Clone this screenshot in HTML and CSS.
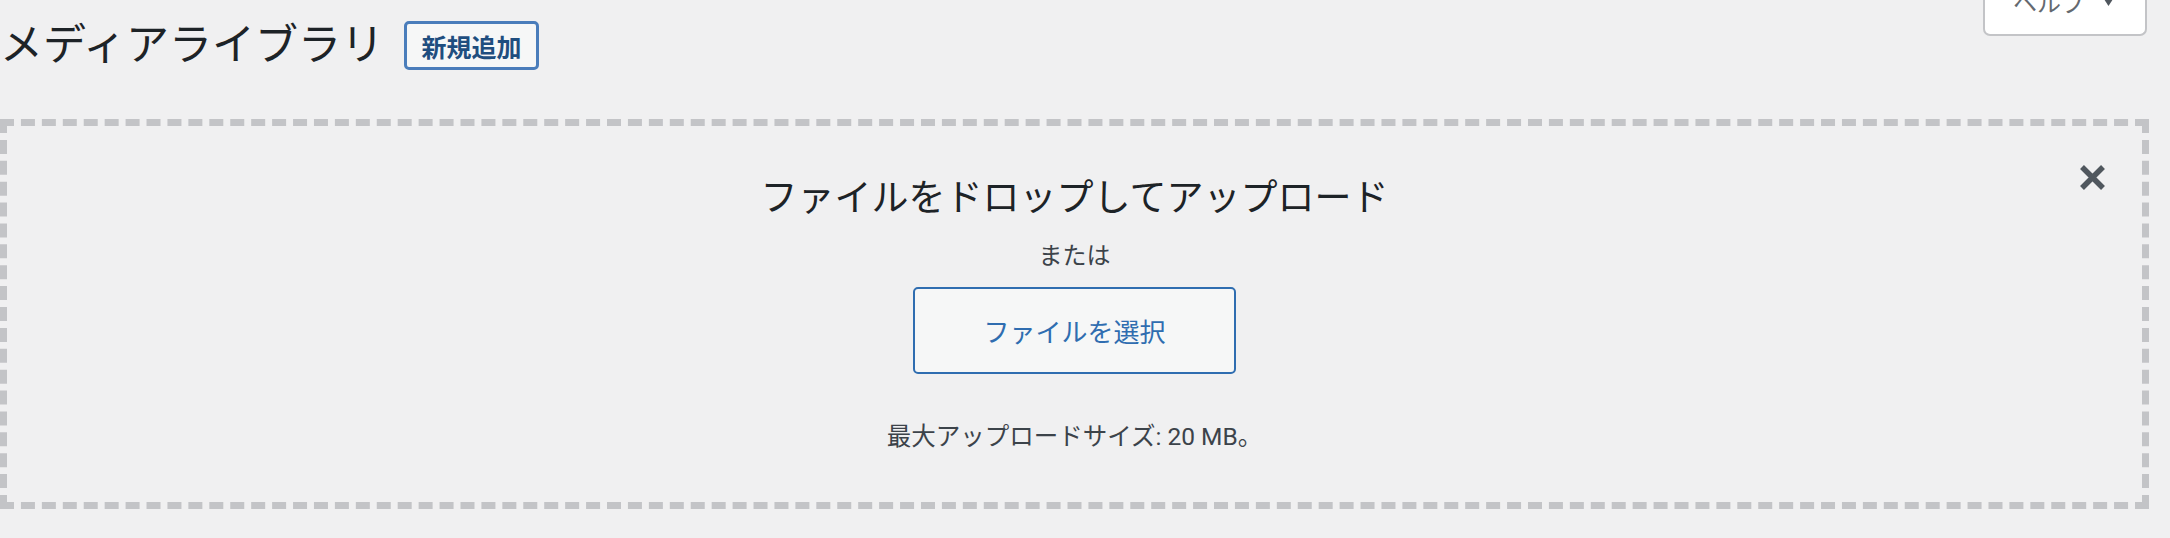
FILE: index.html
```html
<!DOCTYPE html>
<html lang="ja">
<head>
    <meta charset="UTF-8">
    <meta name="viewport" content="width=device-width, initial-scale=1.0">
    <title>メディアライブラリ</title>
    <link rel="stylesheet" href="styles.css">
</head>
<body>
    <div class="wrap">
        <div class="topbar">
            <div class="title-row">
                <h1>メディアライブラリ</h1>
                <a href="#" class="add-new">新規追加</a>
            </div>
            <button class="help-btn">
                <span>ヘルプ</span>
                <svg width="13" height="10" viewBox="0 0 13 10"><path d="M0 0 H13 L6.5 10 Z" fill="#50575e"/></svg>
            </button>
        </div>

        <div class="uploader">
            <button class="close-btn" aria-label="閉じる">
                <svg width="29" height="29" viewBox="0 0 29 29">
                    <path d="M4 4 L25 25 M25 4 L4 25" stroke="#50575e" stroke-width="5.5" fill="none"/>
                </svg>
            </button>
            <div class="upload-ui">
                <h2>ファイルをドロップしてアップロード</h2>
                <p class="or">または</p>
                <button class="browse">ファイルを選択</button>
                <p class="max-size">最大アップロードサイズ: 20 MB。</p>
            </div>
        </div>
    </div>
</body>
</html>
```

FILE: styles.css
```css
body {
    margin: 0;
    background-color: #f0f0f1;
    font-family: Roboto, "Noto Sans CJK JP", sans-serif;
    color: #3c434a;
}
.wrap {
    padding-right: 21px;
}
.topbar {
    display: flex;
    justify-content: space-between;
    align-items: flex-start;
}
.title-row {
    display: flex;
    align-items: center;
    gap: 20px;
    margin-top: 21px;
}
h1 {
    margin: 0;
    font-size: 43px;
    font-weight: 400;
    line-height: 1;
    color: #1d2327;
}
.add-new {
    display: inline-flex;
    align-items: center;
    justify-content: center;
    box-sizing: border-box;
    width: 135px;
    height: 49px;
    border: 3px solid #4a7dbb;
    border-radius: 5px;
    background-color: #f6f7f7;
    color: #1f4e7f;
    font-size: 25px;
    font-weight: 700;
    text-decoration: none;
}
.help-btn {
    display: flex;
    align-items: center;
    gap: 17px;
    box-sizing: border-box;
    height: 60px;
    margin-top: -24px;
    margin-right: 2px;
    padding: 0 30px 8px 28px;
    background-color: #fff;
    border: 2px solid #c3c4c7;
    border-top: none;
    border-radius: 0 0 7px 7px;
    color: #646970;
    font-family: inherit;
    font-size: 24px;
}
.uploader {
    position: relative;
    margin-top: 49px;
    height: 390px;
    box-sizing: border-box;
    border: 7px dashed #c3c4c7;
}
.close-btn {
    position: absolute;
    top: 37px;
    right: 35px;
    padding: 0;
    border: none;
    background: none;
    width: 29px;
    height: 29px;
}
.close-btn svg {
    display: block;
}
.upload-ui {
    display: flex;
    flex-direction: column;
    align-items: center;
    padding-top: 54px;
}
.upload-ui h2 {
    margin: 0;
    font-size: 37px;
    font-weight: 400;
    line-height: 1;
    color: #1d2327;
}
.or {
    margin: 27px 0 0;
    font-size: 24px;
    line-height: 1;
}
.browse {
    box-sizing: border-box;
    width: 323px;
    height: 87px;
    margin-top: 19px;
    border: 2px solid #2f6db0;
    border-radius: 5px;
    background-color: #f6f7f7;
    color: #2f6db0;
    font-family: inherit;
    font-size: 26px;
}
.max-size {
    margin: 51px 0 0;
    font-size: 24.5px;
    line-height: 1;
}
```
